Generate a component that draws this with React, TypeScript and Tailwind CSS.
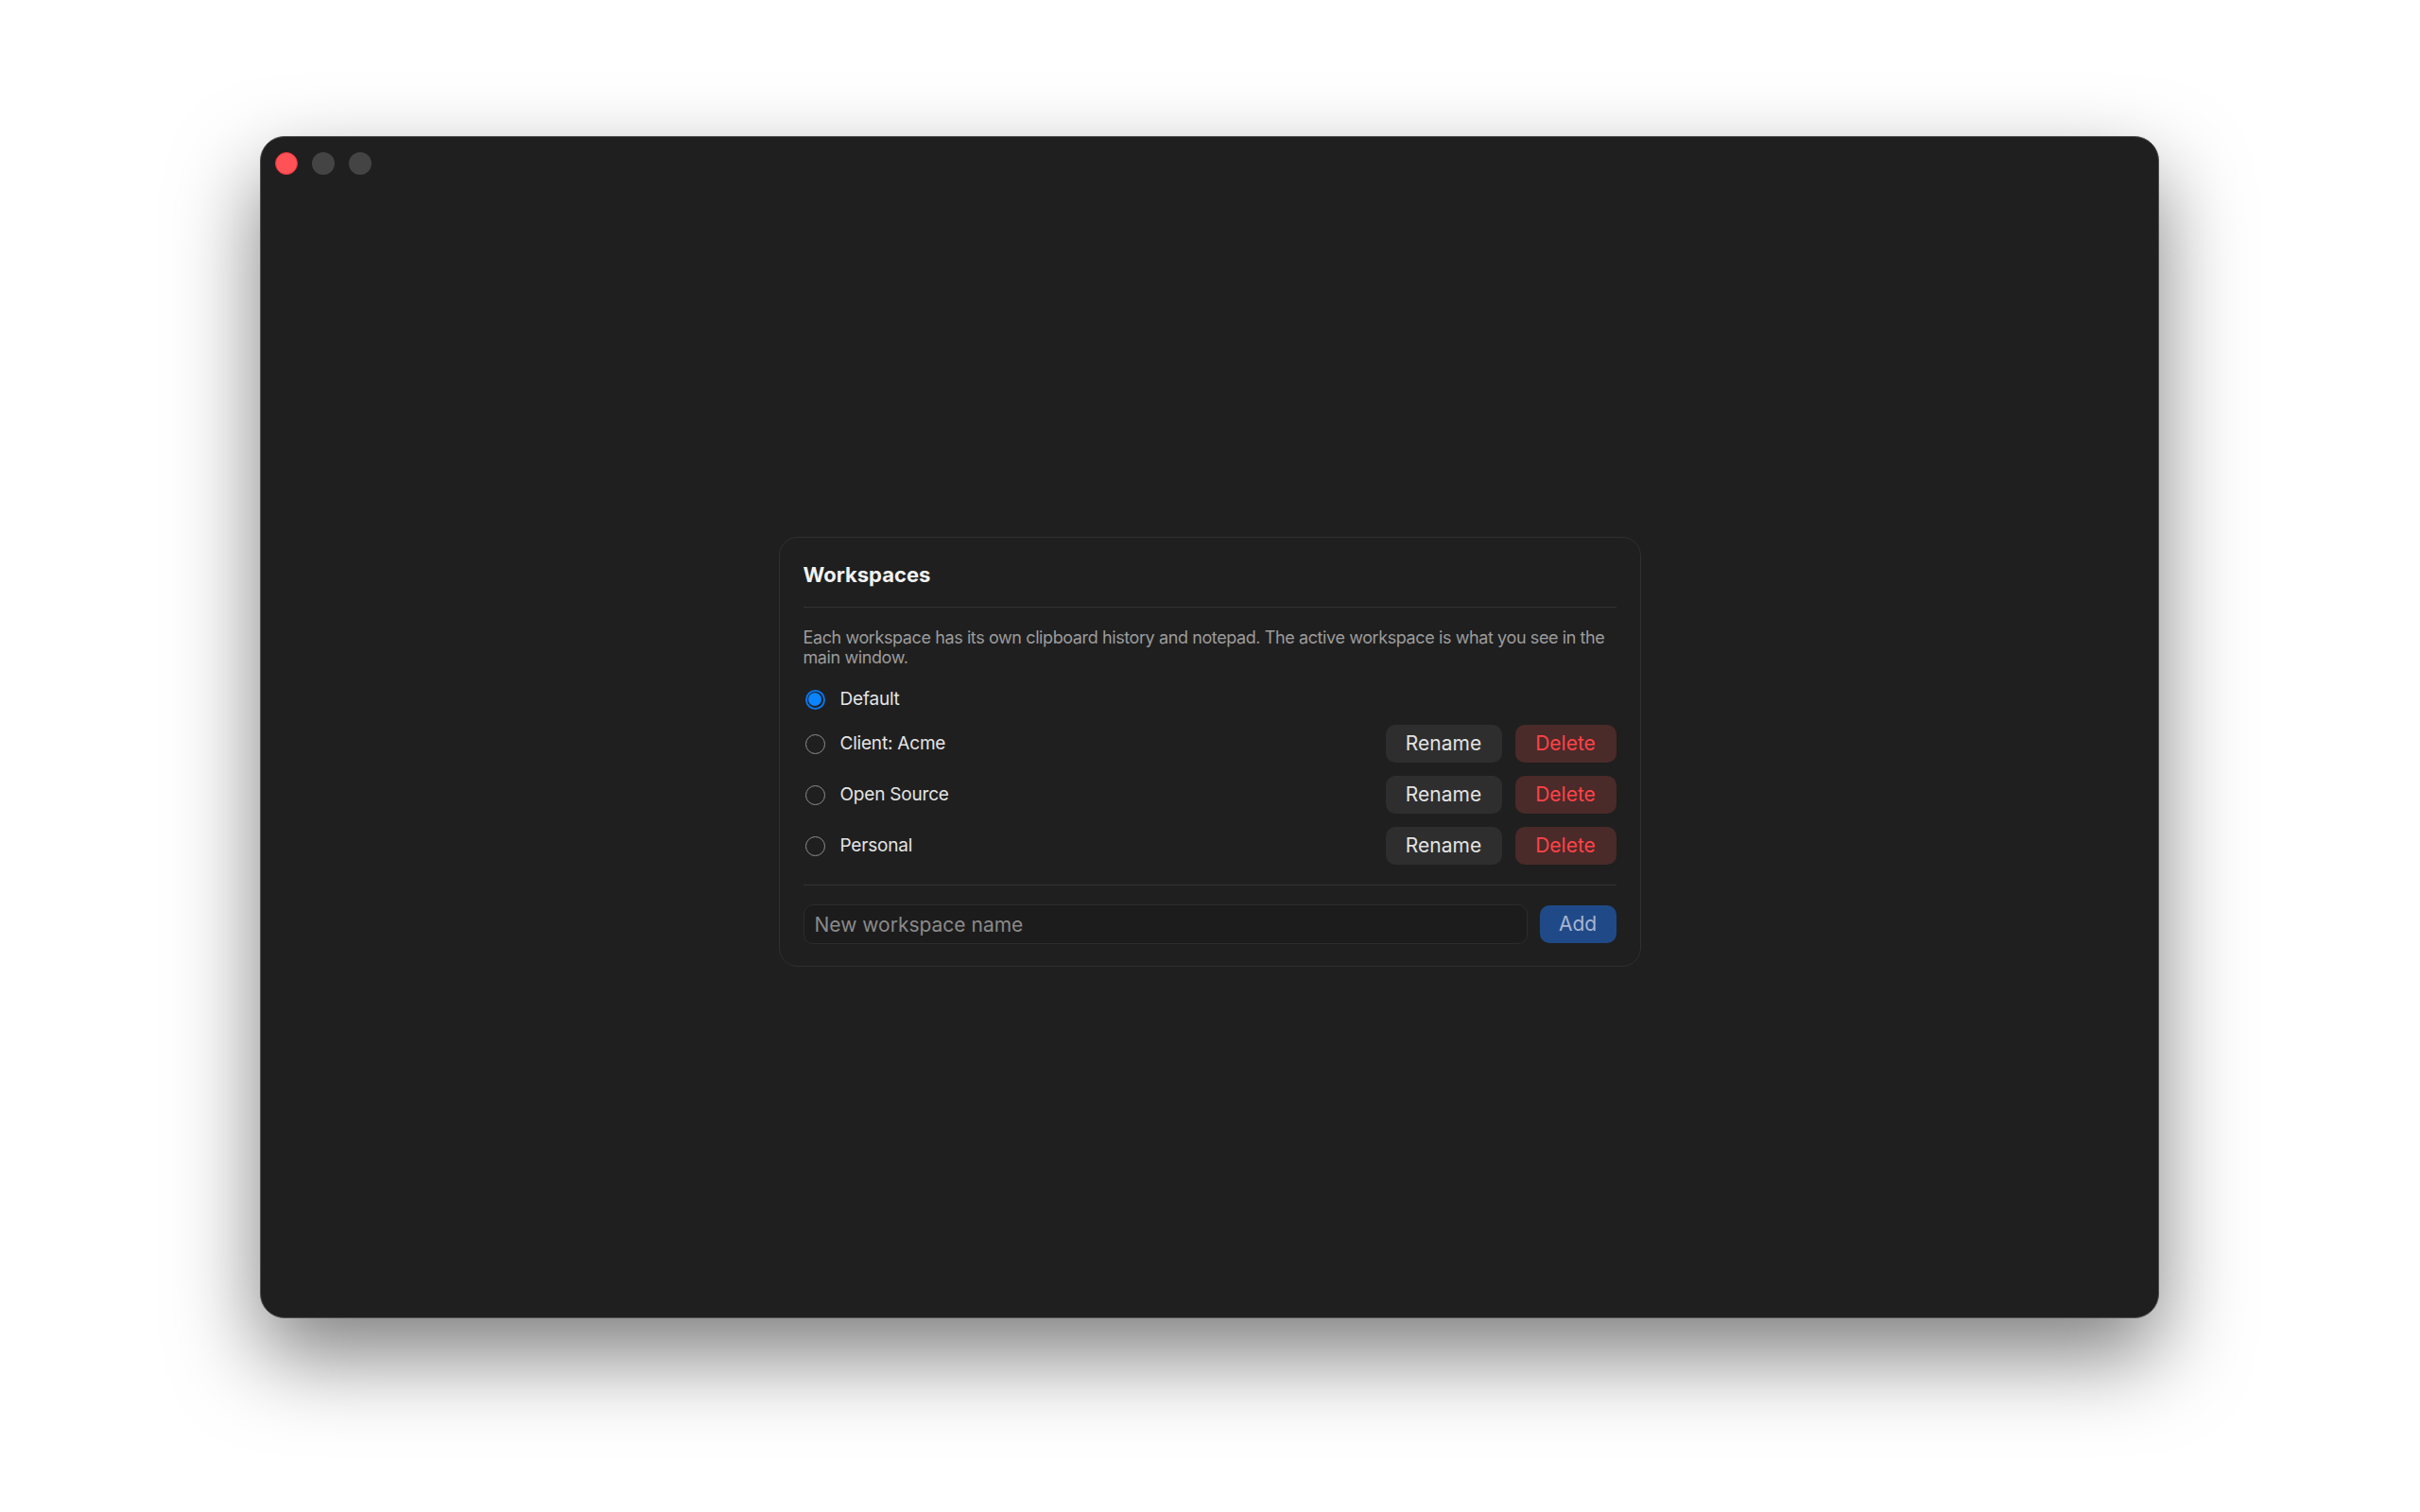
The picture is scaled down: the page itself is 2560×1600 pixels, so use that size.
import React from "react";

const font = { fontFamily: "Inter, 'Noto Sans', sans-serif" };

function Radio({ checked }: { checked: boolean }) {
  if (checked) {
    return (
      <div className="ml-[2px] flex h-[21px] w-[21px] shrink-0 items-center justify-center rounded-full border-[2px] border-[#0a74e8]">
        <div className="h-[14px] w-[14px] rounded-full bg-[#0a84ff]" />
      </div>
    );
  }
  return <div className="ml-[2px] h-[21px] w-[21px] shrink-0 rounded-full border-[1.5px] border-[#8e8e8e]" />;
}

function Row({ name, checked, actions }: { name: string; checked?: boolean; actions?: boolean }) {
  return (
    <div className={`flex items-center ${actions ? "h-[40px]" : "h-[26px]"}`}>
      <Radio checked={!!checked} />
      <span className="ml-[16px] text-[19px] leading-[26px] tracking-[-0.2px] text-[#e4e4e4]">{name}</span>
      <div className="flex-1" />
      {actions && (
        <div className="flex gap-[14px]">
          <button className="flex h-[40px] w-[123px] items-center justify-center rounded-[10px] bg-[#2e2e2e] text-[21px] text-[#e2e2e2]">
            Rename
          </button>
          <button className="flex h-[40px] w-[107px] items-center justify-center rounded-[10px] bg-[#4b2a2a] text-[21px] text-[#ff4347]">
            Delete
          </button>
        </div>
      )}
    </div>
  );
}

export default function App() {
  return (
    <div className="h-[1600px] w-[2560px] overflow-hidden bg-white pl-[275px] pt-[144px]" style={font}>
      <div className="flex h-[1251px] w-[2009px] flex-col rounded-[26px] border border-[#505050] bg-[#1f1f1f] shadow-[0_40px_90px_rgba(0,0,0,0.5)]">
        <div className="flex h-[52px] shrink-0 items-start gap-[15px] pl-[15px] pt-[16px]">
          <div className="h-[24px] w-[24px] rounded-full border border-[#e0323a] bg-[#ff5257]" />
          <div className="h-[24px] w-[24px] rounded-full bg-[#444444]" />
          <div className="h-[24px] w-[24px] rounded-full bg-[#444444]" />
        </div>
        <div className="flex flex-1 items-center justify-center">
          <div className="w-[912px] rounded-[20px] border border-[#303030] bg-[#1f1f1f] px-[25px] pb-[23px] pt-[25px]">
            <div className="border-b border-[#343434] pb-[20px] text-[22px] font-bold leading-[28px] text-[#f2f2f2]">
              Workspaces
            </div>
            <p className="mt-[21px] text-[18px] leading-[21px] tracking-[-0.4px] text-[#9c9c9c]">
              Each workspace has its own clipboard history and notepad. The active workspace is what you see in the main window.
            </p>
            <div className="mt-[21px] flex flex-col gap-[14px]">
              <Row name="Default" checked />
              <Row name="Client: Acme" actions />
              <Row name="Open Source" actions />
              <Row name="Personal" actions />
            </div>
            <div className="mt-[21px] border-t border-[#343434] pt-[20px]">
              <div className="flex items-center gap-[13px]">
                <input
                  className="h-[42px] flex-1 rounded-[10px] border border-[#2c2c2c] bg-[#1c1c1c] pl-[11px] text-[21px] text-[#e4e4e4] outline-none placeholder:text-[#8a8a8a]"
                  placeholder="New workspace name"
                  style={font}
                />
                <button className="flex h-[40px] w-[81px] items-center justify-center rounded-[10px] bg-[#1f4a87] text-[21px] text-[#a7b5d3]">
                  Add
                </button>
              </div>
            </div>
          </div>
        </div>
      </div>
    </div>
  );
}
